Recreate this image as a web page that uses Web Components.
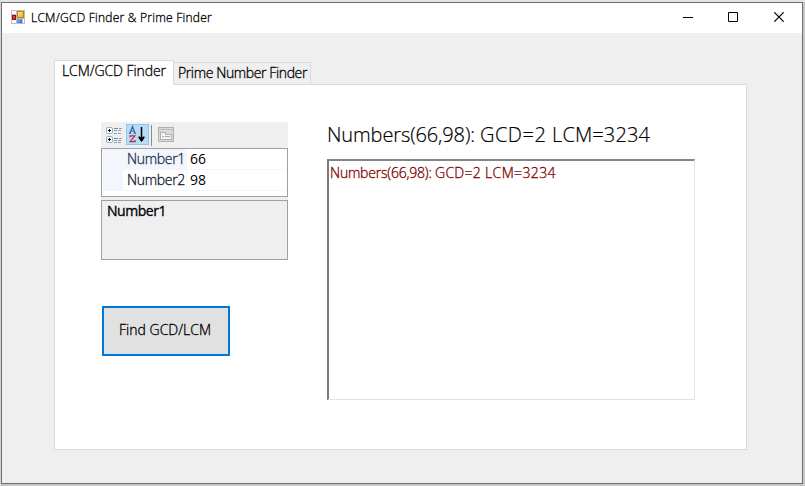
<!DOCTYPE html>
<html lang="en"><head><meta charset="utf-8"><title>LCM/GCD Finder &amp; Prime Finder</title>
<style>
html,body{margin:0;width:805px;height:486px;overflow:hidden;background:#dcdcdc}
body{font-family:"Open Sans","Noto Sans",sans-serif;font-size:14px;font-weight:300;-webkit-text-stroke:.3px;color:#000}
</style></head><body>
<app-window>
  <title-bar slot="title"><fit-text w="181">LCM/GCD Finder &amp; Prime Finder</fit-text></title-bar>
  <tab-set>
    <tab-item slot="tabs" active><fit-text w="104">LCM/GCD Finder</fit-text></tab-item>
    <tab-item slot="tabs"><fit-text w="129">Prime Number Finder</fit-text></tab-item>
    <property-grid slot="side"></property-grid>
    <push-button slot="side"><fit-text w="92">Find GCD/LCM</fit-text></push-button>
    <result-list slot="main">
      <span slot="heading"><fit-text w="153">Numbers(66,98): </fit-text><fit-text w="72">GCD=2 </fit-text><fit-text w="98">LCM=3234</fit-text></span>
      <span><fit-text w="105">Numbers(66,98): </fit-text><fit-text w="50">GCD=2 </fit-text><fit-text w="71">LCM=3234</fit-text></span>
    </result-list>
  </tab-set>
</app-window>
<script>
const define=(name,html,connected)=>customElements.define(name,class extends HTMLElement{
  constructor(){super();this.attachShadow({mode:'open'}).innerHTML=html}
  connectedCallback(){if(connected)connected.call(this)}
});
define('app-window',`<style>
:host{display:block;box-sizing:border-box;width:805px;height:486px;padding:2px 2px 2px 1px;background:linear-gradient(90deg,#d4d4d4 0 1px,transparent 1px),linear-gradient(#e4e4e4 0 2px,#c8c8c8 2px)}
.frame{box-sizing:border-box;width:802px;height:482px;border:1px solid #6e6e6e;background:#efefef;display:flex;flex-direction:column}
</style><div class="frame"><slot name="title"></slot><slot></slot></div>`);
define('title-bar',`<style>
:host{display:flex;box-sizing:border-box;height:30px;background:#fff;padding-left:9px;font-size:12px;line-height:29px}
.logo{margin:7px 6px 0 0;flex:none}
.space{flex:1}.ctl{width:101px;height:10px;margin:9px 18px 0 0;flex:none}
</style><svg class="logo" width="14" height="14" shape-rendering="crispEdges">
<defs><linearGradient id="y" x2="1" y2="1"><stop stop-color="#fff0a0"/><stop offset="1" stop-color="#f0a800"/></linearGradient><linearGradient id="r" x2="1" y2="1"><stop stop-color="#e87060"/><stop offset="1" stop-color="#a80c0c"/></linearGradient><linearGradient id="b" x2="1" y2="1"><stop stop-color="#90b8f8"/><stop offset="1" stop-color="#3068d8"/></linearGradient></defs>
<path fill="#bdbdbd" d="M0 0h14v14H0z"/><path fill="#fff" d="M1 1h4v3H1zM1 10h4v3H1zM12 9h1v4h-1z"/>
<rect x="1" y="5" width="4" height="5" fill="url(#r)"/><path fill="none" stroke="#8e1414" d="M1.500 5.500h3v4h-3z"/><rect x="6.500" y="1.500" width="6" height="6" fill="url(#y)" stroke="#b88410"/><rect x="6" y="9" width="5" height="4" fill="url(#b)"/></svg>
<slot></slot><span class="space"></span>
<svg class="ctl" viewBox="0 0 101 10"><path fill="#000" shape-rendering="crispEdges" d="M0 5h10v1H0z"/><path fill="none" stroke="#000" d="M45.500.5h9v9h-9z"/><path fill="none" stroke="#000" stroke-width="1.15" d="M91.300.3l9.400 9.400M100.700.3l-9.400 9.400"/></svg>`);
define('tab-set',`<style>
:host{display:flex;flex-direction:column;box-sizing:border-box;margin:27px 0 0 52px;width:693px;height:390px}
.tabs{display:flex;align-items:flex-end;height:25px;z-index:1}
.page{box-sizing:border-box;height:366px;margin-top:-1px;border:1px solid #dadada;background:#fff;display:flex;padding:37px 0 0 46px}
.side{width:226px;flex:none}
</style><div class="tabs"><slot name="tabs"></slot></div><div class="page"><div class="side"><slot name="side"></slot></div><slot name="main"></slot></div>`);
define('tab-item',`<style>
:host{display:block;box-sizing:border-box;height:23px;width:137px;border:1px solid #dadada;border-left:0;background:#efefef;padding-left:4px;line-height:20px}
:host([active]){height:25px;width:120px;border-left:1px solid #dadada;border-bottom:0;background:#fff;padding-left:7px}
</style><slot></slot>`);
define('property-grid',`<style>
:host{display:block;width:187px;height:138px}
.bar{height:26px;background:#efefef;display:flex}
.grid{box-sizing:border-box;height:49px;border:1px solid #a0a0a0;background:#fff;padding-bottom:4px}
.row{display:grid;grid-template-columns:21px 64px 1fr;height:21px;line-height:20px;box-sizing:border-box}
.row>*{box-sizing:border-box;border-bottom:1px solid #f3f6fc;height:21px}
.row i{background:#f3f6fc}.name{padding-left:4px;border-right:1px solid #f3f6fc;color:#10182c}.sel{background:#f3f6fc;color:#203050}.val{padding-left:3px;font-weight:400;-webkit-text-stroke:0}
.gap{height:3px;background:#efefef}
.desc{box-sizing:border-box;height:60px;border:1px solid #a0a0a0;background:#efefef;padding-left:5px;line-height:20px;font-weight:400}
</style>
<div class="bar"><svg width="78" height="26" shape-rendering="crispEdges">
<g fill="#fff" stroke="#8fb0d0" shape-rendering="auto"><rect x="5.500" y="5.500" width="6" height="6" rx="1.500"/><rect x="5.500" y="14.500" width="6" height="6" rx="1.500"/></g>
<path stroke="#000" d="M7 8.500h3M8.500 7v3M7 17.500h3M8.500 16v3"/>
<path stroke="#7088b0" d="M13 6.500h4M13 16.500h4"/>
<path stroke="#8f9cb0" stroke-dasharray="3 1" d="M18 6.500h3M13 8.500h8M13 11.500h8M18 16.500h3M13 18.500h8M13 20.500h8"/>
<rect x="25.500" y="2.500" width="22" height="20" fill="#b9dcf5" stroke="#8fc4ec"/>
<g shape-rendering="auto" fill="none" stroke-width="1.200"><path stroke="#3565b0" d="M29 11l2.500-6.500L34 11M30 9h3M28 11.200h2.200M32.700 11.200H35"/><path stroke="#b03040" d="M29.100 15.500v-1.700h4.800l-4.800 5.900h5V18"/><path stroke="#000" stroke-width="1.500" d="M40.500 5v14"/><path fill="#000" stroke="none" d="M37.500 14.500H39l1.500 2 1.500-2h1.500v1.500l-3 4-3-4z"/></g>
<path stroke="#8c8c8c" d="M50.500 3v21"/>
<rect x="57.500" y="5.500" width="15" height="14" fill="#dadada" stroke="#b0b0b0"/><path stroke="#bbb" d="M58 7.500h14"/><path fill="#f2f2f2" stroke="#b2b2b2" d="M59.500 17.500v-7h5v2h6v5z"/><path stroke="#aaa" d="M61 14.500h2M64 14.500h5"/>
</svg></div>
<div class="grid"><div class="row"><i></i><span class="name sel"><fit-text w="58">Number1</fit-text></span><span class="val"><fit-text w="16">66</fit-text></span></div>
<div class="row"><i></i><span class="name"><fit-text w="58">Number2</fit-text></span><span class="val"><fit-text w="16">98</fit-text></span></div></div>
<div class="gap"></div><div class="desc"><fit-text w="59">Number1</fit-text></div>`);
define('push-button',`<style>
:host{display:block;box-sizing:border-box;width:128px;height:50px;margin:46px 0 0 1px;border:2px solid #0078d7;background:#e1e1e1;padding-left:15px;line-height:44px}
</style><slot></slot>`);
define('result-list',`<style>
:host{display:block;width:368px}
.head{font-size:20px;line-height:26px;height:37px;-webkit-text-stroke:.2px}
.list{box-sizing:border-box;height:241px;border:1px solid #e3e3e3;border-top:2px solid #858585;border-left:2px solid #7a7a7a;background:#fff;color:#800000;padding-left:1px;line-height:24px}
</style><div class="head"><slot name="heading"></slot></div><div class="list"><slot></slot></div>`);
// Registered last, so that every text already sits in its styled place when it is measured.
define('fit-text',`<style>:host{display:inline-block;white-space:pre;flex:none}</style><slot></slot>`,function(){
  this.style.letterSpacing='0px';
  const d=+this.getAttribute('w')-this.getBoundingClientRect().width;
  this.style.letterSpacing=(d/this.textContent.length)+'px';
});
</script></body></html>
